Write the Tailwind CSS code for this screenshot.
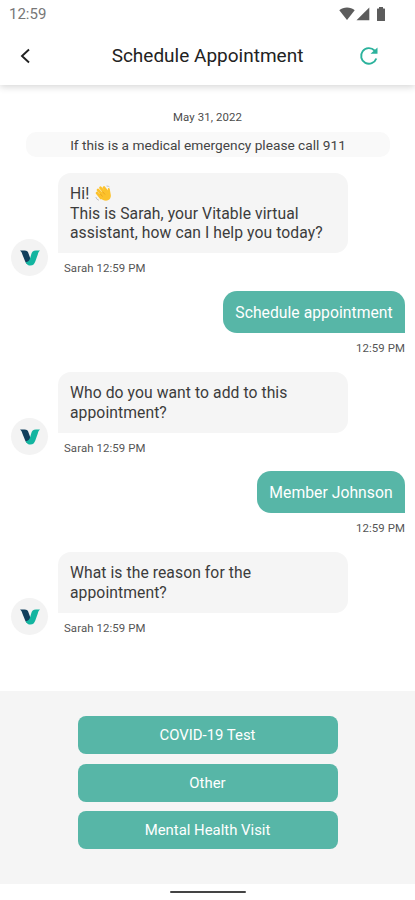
<!DOCTYPE html>
<html lang="en">
<head>
<meta charset="utf-8">
<meta name="viewport" content="width=device-width, initial-scale=1">
<title>Schedule Appointment</title>
<script src="https://cdn.jsdelivr.net/npm/@tailwindcss/browser@4"></script>
</head>
<body class="bg-white font-[Roboto,sans-serif]">
<svg width="0" height="0" class="absolute">
  <symbol id="logo" viewBox="0 0 20 16"><path fill="#123f5c" d="M0 .6H4.500C7 .6 8 1.800 8.600 3.800L10.500 9 9.500 14.500C7 14.500 6 13.500 5.200 11.500L2.400 4.500C1.800 2.500 1.200 1.400 0 .6Z"/><path fill="#12b5a0" d="M20 .6H16C13 .6 11.900 2 11.200 4.500L10.200 8C9.500 10.500 8.300 11.800 5.700 12.300 6.800 14.800 8.300 15.600 10.300 15.600 13.200 15.600 14.500 13.800 15.300 11.500L17.800 4.500C18.400 2.500 18.900 1.400 20 .6Z"/></symbol>
</svg>
<div class="flex h-[900px] w-[415px] flex-col overflow-hidden">
  <header class="relative h-[85px] shrink-0 bg-white shadow-[0_2px_7px_rgba(0,0,0,0.16)]">
    <div class="flex h-[27px] items-center justify-between pr-[29px] pl-[9px]">
      <span class="pt-px text-[15px] leading-[26px] text-[#777]">12:59</span>
      <div class="flex items-center text-[#5c5c5c]">
        <svg class="h-[14px] w-[16px]" viewBox="0 0 16 14" fill="currentColor"><path d="M.3 3.300C4.500-.4 11.500-.4 15.700 3.300L8 13Z"/></svg>
        <svg class="ml-px h-[14px] w-[14px]" viewBox="0 0 14 14" fill="currentColor"><path d="M13.300.5V13.300H.5Z"/></svg>
        <svg class="ml-[6px] h-[14px] w-[10px]" viewBox="0 0 10 14" fill="currentColor"><path d="M3 0H7V1.500H8.500Q9 1.500 9 2V13.500Q9 14 8.500 14H1.500Q1 14 1 13.500V2Q1 1.500 1.500 1.500H3Z"/></svg>
      </div>
    </div>
    <div class="flex h-[57px] items-center justify-between pr-[36px] pl-[19px]">
      <svg class="h-[16px] w-[12px]" viewBox="0 0 12 16" fill="none" stroke="#222" stroke-width="1.900"><path d="M10 1.500 3 8 10 14.500"/></svg>
      <h1 class="ml-[25px] text-[19px] leading-6 whitespace-nowrap text-[#222]">Schedule Appointment</h1>
      <svg class="h-[20px] w-[20px]" viewBox="0 0 20 20" fill="none" stroke="#2bb29c" stroke-width="1.900"><path d="M17.300 12.500A7.800 7.800 0 1 1 15.500 4.500L17.500 6.500"/><path fill="#2bb29c" stroke="none" d="M11.500 7.800H18.500V1.500Z"/></svg>
    </div>
  </header>

  <main class="flex h-[605.500px] shrink-0 flex-col pr-[10px] pl-[11px]">
    <p class="mt-[25px] ml-[-1px] h-[14px] text-center text-[11.400px] leading-[14px] tracking-[0.1px] text-[#4c4c4c]">May 31, 2022</p>
    <p class="mt-[8px] mr-[15px] ml-[15px] h-[25px] rounded-[10px] bg-[#f9f9f9] text-center text-[13.700px] leading-[26px] text-[#444]">If this is a medical emergency please call 911</p>

    <section class="mt-[16px] flex h-[103px] items-end gap-[10px]">
      <div class="flex size-[37px] items-center justify-center rounded-full bg-[#f3f3f3]"><svg class="h-[16px] w-[20px]"><use href="#logo"/></svg></div>
      <div class="h-full">
        <p class="h-[80px] w-[290px] rounded-[13px] rounded-bl-none bg-[#f5f5f5] px-3 pt-[11.400px] text-[15.700px] leading-[19.300px] tracking-[0.07px] whitespace-nowrap text-[#3c3c3c]">Hi! <svg class="ml-[2px] inline h-[17px] w-[17px] align-[-3px]" viewBox="0 0 17 17"><path d="M2 8 6 13M3 5 9 11M5.500 2.800 11 9M9 2.500 13 7.500" stroke="#fcc22c" stroke-width="2.700" stroke-linecap="round"/><path d="M3.500 9.500 10.500 4.500 12.500 6.500 13 3.200C14.500 2.700 15 4 15 5.500L15.800 10C16.300 14 13 16.300 9.500 15.500 6.500 15 5 12.500 3.500 9.500Z" fill="#fcc22c"/><path d="M5 8.500 7.500 11.500M7.500 6.500 10 9.500" stroke="#e59b1c" stroke-width=".7"/><path d="M.8 12Q1.500 14.700 4 15.300M11.500 1Q13.500 1 14.500 2" stroke="#aaa" stroke-width=".7" fill="none"/></svg><br>This is Sarah, your Vitable virtual<br>assistant, how can I help you today?</p>
        <p class="mt-[8px] ml-[6px] text-[11.400px] leading-[15px] tracking-[0.1px] text-[#555]">Sarah 12:59 PM</p>
      </div>
    </section>

    <section class="mt-[15px] flex h-[65px] flex-col items-end">
      <p class="flex h-[42px] w-[182px] items-center justify-center rounded-[14px] rounded-br-none bg-[#57b6a7] pt-px text-[15.700px] tracking-[0.04px] text-white">Schedule appointment</p>
      <p class="mt-[8px] text-[11.400px] leading-[15px] tracking-[0.1px] text-[#555]">12:59 PM</p>
    </section>

    <section class="mt-[16px] flex h-[83px] items-end gap-[10px]">
      <div class="flex size-[37px] items-center justify-center rounded-full bg-[#f3f3f3]"><svg class="h-[16px] w-[20px]"><use href="#logo"/></svg></div>
      <div class="h-full">
        <p class="h-[61px] w-[290px] rounded-[13px] rounded-bl-none bg-[#f5f5f5] px-3 pt-[11.400px] text-[15.700px] leading-[19.300px] tracking-[0.07px] whitespace-nowrap text-[#3c3c3c]">Who do you want to add to this<br>appointment?</p>
        <p class="mt-[8px] ml-[6px] text-[11.400px] leading-[15px] tracking-[0.1px] text-[#555]">Sarah 12:59 PM</p>
      </div>
    </section>

    <section class="mt-[16px] flex h-[65px] flex-col items-end">
      <p class="flex h-[42px] w-[148px] items-center justify-center rounded-[14px] rounded-br-none bg-[#57b6a7] pt-px text-[15.700px] tracking-[0.04px] text-white">Member Johnson</p>
      <p class="mt-[8px] text-[11.400px] leading-[15px] tracking-[0.1px] text-[#555]">12:59 PM</p>
    </section>

    <section class="mt-[16px] flex h-[83px] items-end gap-[10px]">
      <div class="flex size-[37px] items-center justify-center rounded-full bg-[#f3f3f3]"><svg class="h-[16px] w-[20px]"><use href="#logo"/></svg></div>
      <div class="h-full">
        <p class="h-[61px] w-[290px] rounded-[13px] rounded-bl-none bg-[#f5f5f5] px-3 pt-[11.400px] text-[15.700px] leading-[19.300px] tracking-[0.07px] whitespace-nowrap text-[#3c3c3c]">What is the reason for the<br>appointment?</p>
        <p class="mt-[8px] ml-[6px] text-[11.400px] leading-[15px] tracking-[0.1px] text-[#555]">Sarah 12:59 PM</p>
      </div>
    </section>
  </main>

  <div class="flex h-[193.500px] shrink-0 flex-col items-center gap-[9.500px] bg-[#f5f5f5] pt-[25.500px]">
    <button class="h-[38px] w-[260px] rounded-[8px] bg-[#57b6a7] pt-px text-[14.900px] text-white">COVID-19 Test</button>
    <button class="h-[38px] w-[260px] rounded-[8px] bg-[#57b6a7] pt-px text-[14.900px] text-white">Other</button>
    <button class="h-[38px] w-[260px] rounded-[8px] bg-[#57b6a7] pt-px text-[14.900px] text-white">Mental Health Visit</button>
  </div>
  <footer class="flex h-4 justify-center pt-[7px]"><div class="h-[2px] w-[76px] rounded-full bg-[#444]"></div></footer>
</div>
</body>
</html>
